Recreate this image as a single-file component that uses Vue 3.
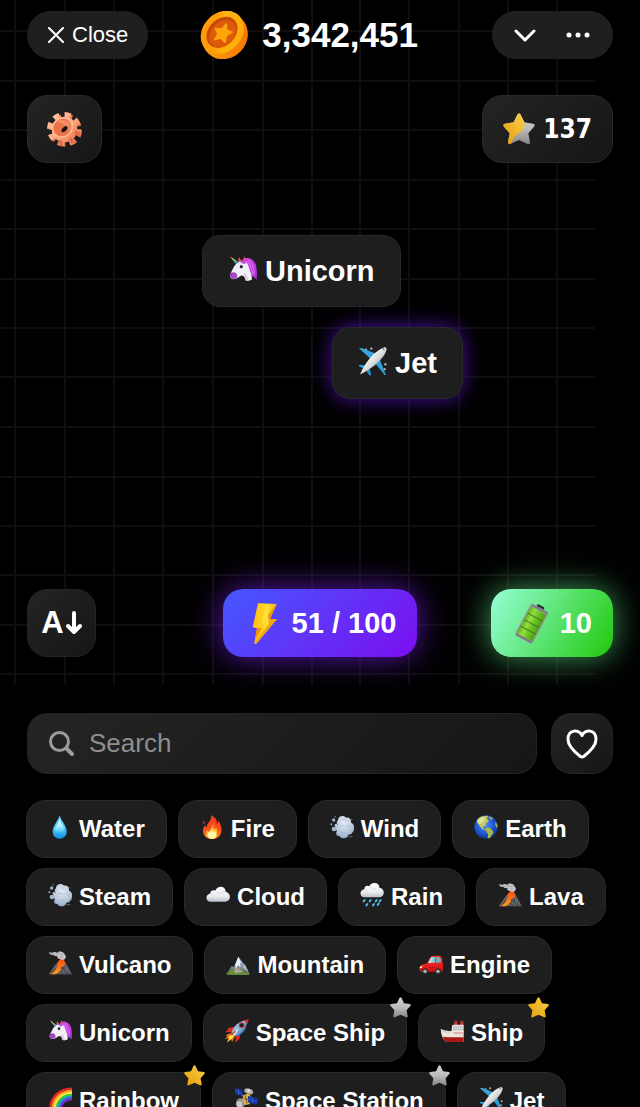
<script setup>
import { ref } from 'vue'

const query = ref('')

const columns = [15, 65, 114, 163, 213, 263, 312, 360, 409, 459, 508, 557]
const rows = [31, 81, 130, 180, 229, 279, 328, 377, 427, 477, 526, 575, 625, 674]

const elements = [
  { name: 'Water', icon: 'water' },
  { name: 'Fire', icon: 'fire' },
  { name: 'Wind', icon: 'wind' },
  { name: 'Earth', icon: 'earth' },
  { name: 'Steam', icon: 'wind' },
  { name: 'Cloud', icon: 'cloud' },
  { name: 'Rain', icon: 'rain' },
  { name: 'Lava', icon: 'volcano' },
  { name: 'Vulcano', icon: 'volcano' },
  { name: 'Mountain', icon: 'mountain' },
  { name: 'Engine', icon: 'car' },
  { name: 'Unicorn', icon: 'unicorn' },
  { name: 'Space Ship', icon: 'rocket', star: 'silver' },
  { name: 'Ship', icon: 'ship', star: 'gold' },
  { name: 'Rainbow', icon: 'rainbow', star: 'gold' },
  { name: 'Space Station', icon: 'satellite', star: 'silver' },
  { name: 'Jet', icon: 'jet' },
]
</script>

<template>
  <div class="page">
    <svg class="defs" width="0" height="0" aria-hidden="true">
      <defs>
        <linearGradient id="g-water" x1="0" y1="0" x2="0" y2="1">
          <stop offset="0" stop-color="#4fc4f7" /><stop offset=".5" stop-color="#5ccbfa" /><stop offset="1" stop-color="#0c8ee8" />
        </linearGradient>
        <linearGradient id="g-water-in" x1="0" y1="0" x2="0" y2="1">
          <stop offset="0" stop-color="#e8fbff" /><stop offset=".55" stop-color="#a9ecff" /><stop offset="1" stop-color="#1fb0f4" />
        </linearGradient>
        <linearGradient id="g-fire" x1="0" y1="0" x2="0" y2="1">
          <stop offset="0" stop-color="#f0391d" /><stop offset=".6" stop-color="#f8501c" /><stop offset="1" stop-color="#ff8f1f" />
        </linearGradient>
        <radialGradient id="g-flame" cx=".5" cy=".85" r=".7">
          <stop offset="0" stop-color="#fffbd0" /><stop offset=".4" stop-color="#ffe14a" /><stop offset="1" stop-color="#ff8a1c" />
        </radialGradient>
        <radialGradient id="g-puff" cx=".45" cy=".3" r=".75">
          <stop offset="0" stop-color="#e3ebf5" /><stop offset=".6" stop-color="#b9c8dc" /><stop offset="1" stop-color="#8ea2bd" />
        </radialGradient>
        <radialGradient id="g-earth" cx=".45" cy=".4" r=".6">
          <stop offset="0" stop-color="#4f96f5" /><stop offset=".6" stop-color="#1f5bd6" /><stop offset="1" stop-color="#15328f" />
        </radialGradient>
        <linearGradient id="g-cloud" x1="0" y1="0" x2="0" y2="1">
          <stop offset="0" stop-color="#ffffff" /><stop offset=".65" stop-color="#e9ebef" /><stop offset="1" stop-color="#b9bfc9" />
        </linearGradient>
        <linearGradient id="g-rock" x1="0" y1="0" x2="1" y2="1">
          <stop offset="0" stop-color="#8b7a6d" /><stop offset="1" stop-color="#4b4b51" />
        </linearGradient>
        <linearGradient id="g-lava" x1="0" y1="0" x2="0" y2="1">
          <stop offset="0" stop-color="#ff4b12" /><stop offset="1" stop-color="#ff9d1b" />
        </linearGradient>
        <linearGradient id="g-mount" x1="0" y1="0" x2="0" y2="1">
          <stop offset="0" stop-color="#8fb4da" /><stop offset=".6" stop-color="#7d8a95" /><stop offset="1" stop-color="#5d6e3e" />
        </linearGradient>
        <linearGradient id="g-car" x1="0" y1="0" x2="0" y2="1">
          <stop offset="0" stop-color="#ff3b35" /><stop offset="1" stop-color="#d20f12" />
        </linearGradient>
        <linearGradient id="g-mane" x1="0" y1="0" x2="1" y2="1">
          <stop offset="0" stop-color="#d94df0" /><stop offset="1" stop-color="#a52fd4" />
        </linearGradient>
        <linearGradient id="g-horn" x1="0" y1="0" x2="1" y2="1">
          <stop offset="0" stop-color="#f05a5a" /><stop offset=".3" stop-color="#f5c84b" /><stop offset=".6" stop-color="#45c98a" /><stop offset="1" stop-color="#4a91e8" />
        </linearGradient>
        <linearGradient id="g-rocket" x1="0" y1="0" x2="1" y2="1">
          <stop offset="0" stop-color="#b9dcf5" /><stop offset=".5" stop-color="#80b2dc" /><stop offset="1" stop-color="#42719f" />
        </linearGradient>
        <linearGradient id="g-jet" x1="0" y1="0" x2="1" y2="1">
          <stop offset=".3" stop-color="#ffffff" /><stop offset=".55" stop-color="#d8d8da" /><stop offset=".75" stop-color="#88888b" />
        </linearGradient>
        <linearGradient id="g-gold" x1="0" y1="1" x2="1" y2="0">
          <stop offset="0" stop-color="#e39c0c" /><stop offset=".55" stop-color="#f0b92b" /><stop offset="1" stop-color="#f8d055" />
        </linearGradient>
        <linearGradient id="g-silver" x1="0" y1="0" x2="0" y2="1">
          <stop offset="0" stop-color="#d2d2d2" /><stop offset=".5" stop-color="#bcbcbc" /><stop offset="1" stop-color="#868686" />
        </linearGradient>
        <linearGradient id="g-coin-side" x1="0" y1="0" x2="1" y2="1">
          <stop offset=".2" stop-color="#ff9d0a" /><stop offset=".8" stop-color="#f77a08" /><stop offset="1" stop-color="#ee5e06" />
        </linearGradient>
        <linearGradient id="g-coin-face" x1="0" y1="0" x2="1" y2="1">
          <stop offset=".1" stop-color="#ff9a08" /><stop offset=".4" stop-color="#ff9f08" /><stop offset=".55" stop-color="#ffb40e" /><stop offset="1" stop-color="#ffa80a" />
        </linearGradient>
        <linearGradient id="g-bolt" x1="0" y1="0" x2="1" y2="0">
          <stop offset="0" stop-color="#ffb90b" /><stop offset=".6" stop-color="#ffdc2e" /><stop offset="1" stop-color="#f5b014" />
        </linearGradient>
        <linearGradient id="g-batt" x1="0" y1="0" x2="1" y2="0">
          <stop offset="0" stop-color="#5fb31c" /><stop offset=".3" stop-color="#93e03f" /><stop offset=".6" stop-color="#6cc322" /><stop offset="1" stop-color="#4fa017" />
        </linearGradient>
        <linearGradient id="g-gear" x1="0" y1="0" x2="1" y2="1">
          <stop offset="0" stop-color="#ffc5a2" /><stop offset=".5" stop-color="#fda680" /><stop offset="1" stop-color="#ea7750" />
        </linearGradient>
        <clipPath id="c-earth"><circle cx="36" cy="36" r="35" /></clipPath>

        <path id="star-shape" d="M43 5q5-7 10 0l11 23 26 4q8 2 3 9L76 61l5 27q0 7-7 5L48 81 22 93q-7 2-7-5l5-27L3 41q-5-7 3-9l26-4Z" />

        <symbol id="water" viewBox="0 0 72 72">
          <path d="M35 1C31 18 14 32 14 51a21 20 0 0 0 42 0C56 32 39 18 35 1Z" fill="url(#g-water)" />
          <path d="M35 10C32 24 21 36 21 47q3 9 14 9t14-9C49 36 38 24 35 10Z" fill="url(#g-water-in)" />
        </symbol>
        <symbol id="fire" viewBox="0 0 72 72">
          <path d="M33 1c12 6 20 13 17 25 5-2 5-7 4-10 9 11 13 27 9 38-4 13-14 18-27 18C20 72 9 62 9 47c0-7 3-13 7-17 0 4 2 6 5 7C19 23 37 18 33 1Z" fill="url(#g-fire)" />
          <path d="M9 18c4 2 6 5 4 10-3-2-4-6-4-10Z" fill="#e7482b" />
          <path d="M39 22c5 11-1 17 4 20 4 0 4-5 4-7 8 9 10 35-11 36-18 0-21-16-14-26 1 4 3 6 6 5 3-9 11-14 11-28Z" fill="url(#g-flame)" />
          <ellipse cx="36" cy="60" rx="13" ry="11" fill="#fff7a8" />
        </symbol>
        <symbol id="wind" viewBox="0 0 72 72">
          <path d="M48 14h19M55 65h12M20 60h18M57 50h15" stroke="#7f90a8" stroke-width="2" />
          <path d="M24 16C24 2 42 0 48 8c10-3 17 7 15 15 12 5 13 20 5 27-2 7-7 9-13 9-3 14-22 14-27 4-10 0-12-9-7-15-8-6-7-17 3-18-6-4-4-10 0-14Z" fill="url(#g-puff)" />
          <path d="M37 15q9-4 11 5M30 33q10-6 17 2M32 51q9 6 18-1M50 31q9-2 10 7" stroke="#a0b1c8" stroke-width="2" fill="none" />
          <circle cx="11" cy="15" r="5" fill="#9badc5" /><circle cx="4" cy="28" r="3" fill="#9badc5" /><circle cx="12" cy="42" r="7" fill="#a6b6cc" /><circle cx="18" cy="31" r="4" fill="#c3d0e0" /><circle cx="15" cy="5" r="2" fill="#8497b0" />
        </symbol>
        <symbol id="earth" viewBox="0 0 72 72">
          <circle cx="36" cy="36" r="35" fill="url(#g-earth)" />
          <g clip-path="url(#c-earth)">
            <path d="M11 12C20 3 34 1 42 3l-3 8 6 7-9 7-2 8-8 2 3 6 6 4-3 1-10-6-7-11C9 25 7 18 11 12Z" fill="#c8c75d" />
            <path d="M18 10l12-4 2 9-8 10-9 2-4-9Z" fill="#dce69a" />
            <path d="M35 39c8-4 18 1 20 8 5 2 4 7 0 10l-5 9-5 5-4-1 1-14-7-9Z" fill="#a8b848" />
            <path d="M44 4l14 5-6 6-8-5ZM65 20l8 12-5 8-5-12Z" fill="#8fa761" />
          </g>
        </symbol>
        <symbol id="cloud" viewBox="0 0 72 72">
          <path d="M14 56C-2 56-3 34 12 32c1-9 10-12 16-9 6-18 31-15 31 3 17 3 17 28 0 30Z" fill="url(#g-cloud)" />
          <path d="M12 33q6-1 9 3M29 23q7 1 8 8 8-5 13 0M48 26q6-3 11 1" fill="none" stroke="#d5d9df" stroke-width="2" />
        </symbol>
        <symbol id="rain" viewBox="0 0 72 72">
          <path d="M14 43C-2 43-3 21 13 19 13 8 23 7 28 10 34-5 59-2 58 14c18 2 17 27 1 29Z" fill="url(#g-cloud)" />
          <path d="M12 20q6-1 9 3M29 10q7 1 8 8 8-4 13 0" fill="none" stroke="#d5d9df" stroke-width="2" />
          <path d="M14 51l-3 4M32 51l-3 4M50 51l-3 4M62 51l-3 4M22 63l-3 4M42 63l-3 4M56 62l-3 4" stroke="#52bce9" stroke-width="6" stroke-linecap="round" />
        </symbol>
        <symbol id="volcano" viewBox="0 0 72 72">
          <path d="M2 70l20-28 10-12h18l22 40Z" fill="url(#g-rock)" />
          <path d="M48 38l24 32H42l-6-16Z" fill="#4d4f59" />
          <path d="M30 34l6-10 12 1 3 16-5 5-8 3 1 7-9 9-8 5H9l14-15 7-12Z" fill="url(#g-lava)" />
          <path d="M22 50l5-3-7 13-7 7-5 1Z" fill="#5b4740" />
          <path d="M51 45l5 17M57 48l9 18M42 56l8 13" stroke="#85878f" stroke-width="2" />
          <path d="M2 4l10 1 8-2 8 2 6-4 11 3 5 6 4 7-3 7-7 3-9-3-8-4 2-4-9-1-5-4-7 0Z" fill="#c6c6c8" />
          <path d="M12 8l13 3 8-5 6 6 6-3M36 17l9 3" stroke="#96969a" stroke-width="2" fill="none" />
        </symbol>
        <symbol id="mountain" viewBox="0 0 72 72">
          <path d="M1 70l16-25 7 3 13-31 14 18 7 6 13 27-13 3Z" fill="url(#g-mount)" />
          <path d="M37 17l10 21-5-3 2 14-8-7-9 19 3-18-5 5Z" fill="#e6f1fb" />
          <path d="M44 27l7 18 6-2 10 20-10-8-7-6Z" fill="#a9bdcd" />
          <path d="M23 63l7-14 3 8 5-9 4 11 6-5 3 9-9 4H25Z" fill="#b5a392" />
          <path d="M1 71l15-22 4 12 9 5 19-3 23 6-3 3Z" fill="#66913d" />
          <path d="M15 53l-8 14M46 57l15 6" stroke="#3e6b2b" stroke-width="2" />
        </symbol>
        <symbol id="car" viewBox="0 0 72 72">
          <path d="M2 60C-1 48 2 43 8 41l16-4 9-17q3-6 10-6h16q8 0 10 8l3 22v12q0 6-6 6H8Z" fill="url(#g-car)" />
          <path d="M28 36l8-15q2-3 6-3h7l-2 17Z" fill="#8ccbd7" />
          <path d="M52 18h7q4 0 5 5l2 11-15 2Z" fill="#6fb3c3" />
          <path d="M28 36l8-15q2-3 6-3l-7 18Z" fill="#c0e4ea" />
          <circle cx="18" cy="61" r="9" fill="#333" /><circle cx="18" cy="61" r="5" fill="#b5b5b7" />
          <circle cx="57" cy="61" r="9" fill="#333" /><circle cx="57" cy="61" r="5" fill="#b5b5b7" />
          <path d="M3 47l8-2-3 6-6 1Z" fill="#fff0d0" /><path d="M30 50h18" stroke="#980e11" stroke-width="2" />
        </symbol>
        <symbol id="unicorn" viewBox="0 0 72 72">
          <path d="M36 12C50 0 70 12 71 34c1 9 1 18 0 28-4-7-10-9-16-9L40 30Z" fill="url(#g-mane)" />
          <path d="M50 14q16 10 15 34M42 14q19 8 18 37" fill="none" stroke="#ef83f5" stroke-width="2" />
          <path d="M24 19C34 12 47 15 51 27c4 11 7 22 9 33q-8 6-16 3C42 56 39 51 33 51c-7 4-11 9-19 9C4 60 3 50 8 42 13 34 15 25 24 19Z" fill="#f1f0f6" />
          <path d="M5 46q7-5 14-2 6 5 3 13-8 5-15 1-4-5-2-12Z" fill="#a549c6" />
          <path d="M42 44q6 6 9 20l-7-1q-1-9-6-12Z" fill="#d9cbe0" />
          <path d="M25 18l2-13 7 10ZM36 15l5-12 4 14Z" fill="#e1517a" />
          <path d="M30 17q8-6 15-1-2 9-9 5Z" fill="#c04ae7" />
          <path d="M5 3l20 14-5 6Z" fill="url(#g-horn)" />
          <circle cx="33" cy="29" r="4" fill="#2b2331" /><circle cx="9" cy="47" r="2" fill="#613176" />
        </symbol>
        <symbol id="rocket" viewBox="0 0 72 72">
          <path d="M28 23l-17 4-9 13 19-1ZM47 42l-4 18-13 11 3-20Z" fill="#de2b22" />
          <path d="M18 42L2 49l6 3-8 8 11-2-6 13 14-10 2 8 9-17Z" fill="#ff7a1c" />
          <path d="M19 47l-9 7 3 4-6 11 13-10 7-9Z" fill="#ffe145" />
          <path d="M19 43C24 22 43 5 65 4c2 22-13 44-35 48Z" fill="url(#g-rocket)" />
          <path d="M30 52C49 46 63 28 65 4c3 26-8 41-33 49Z" fill="#366a9c" />
          <path d="M56 4l15-3-3 15Z" fill="#df2929" />
          <circle cx="50" cy="19" r="9" fill="#db4545" /><circle cx="50" cy="19" r="6" fill="#21232b" />
          <path d="M20 42l22-15-13 23Z" fill="#d8e5ef" /><path d="M18 47l13-10" stroke="#c92d29" stroke-width="4" />
        </symbol>
        <symbol id="ship" viewBox="0 0 72 72">
          <path d="M43 5h9v18h-9zM61 5h9v18h-9z" fill="#db3637" /><path d="M43 5h9v5h-9zM61 5h9v5h-9z" fill="#783136" />
          <path d="M36 20q1-3 5-3h30v28H34Z" fill="#e2e2de" />
          <path d="M40 24h30M39 31h31" stroke="#8a9196" stroke-width="3" stroke-dasharray="4 3" />
          <path d="M2 30q16 7 32 6h37v33H20Q4 60 2 30Z" fill="#eee6dc" />
          <path d="M9 53l14 2h48v14H20Q12 65 9 53Z" fill="#ae1717" /><path d="M4 34l14 6 14-2" stroke="#b8afa5" stroke-width="2" fill="none" />
          <path d="M40 42h31" stroke="#c84b4d" stroke-width="2" />
        </symbol>
        <symbol id="rainbow" viewBox="0 0 72 72">
          <g fill="none" stroke-width="7">
            <path d="M7 72V68C7 30 34 5 72 5" stroke="#f22425" />
            <path d="M14 72V68C14 35 38 12 72 12" stroke="#ff9a20" />
            <path d="M20 72V68C20 39 41 18 72 18" stroke="#fbe63f" />
            <path d="M26 72V68C26 42 45 24 72 24" stroke="#38cd49" />
            <path d="M32 72V68C32 45 49 30 72 30" stroke="#218be4" />
            <path d="M38 72V68C38 49 53 36 72 36" stroke="#7330ca" />
          </g>
        </symbol>
        <symbol id="satellite" viewBox="0 0 72 72">
          <circle cx="20" cy="48" r="14" fill="#8f9190" /><circle cx="16" cy="52" r="9" fill="#c9c9c5" />
          <path d="M22 24l34 14" stroke="#9a9a9a" stroke-width="5" />
          <path d="M29 24l15-5 10 13-7 20-14 2-8-14Z" fill="#e0b13f" /><path d="M34 25l5 24M29 36l20 1" stroke="#705a32" stroke-width="3" />
          <ellipse cx="44" cy="13" rx="14" ry="8" transform="rotate(20 44 13)" fill="#b0afad" /><circle cx="44" cy="11" r="5" fill="#deddda" />
          <path d="M2 3l23 6 1 18-21-5ZM42 27l30 7-4 20-26-8Z" fill="#1436a8" />
          <path d="M13 6l2 18M3 12l22 7M56 31l-1 18M42 36l28 8" stroke="#4766c4" stroke-width="2" />
        </symbol>
        <symbol id="jet" viewBox="0 0 72 72">
          <g fill="#adadb0"><circle cx="20" cy="7" r="3" /><circle cx="33" cy="4" r="3" /><circle cx="68" cy="43" r="3" /><circle cx="66" cy="55" r="3" /></g>
          <path d="M2 3l9 0 37 15-9 18Z" fill="#36a5da" /><path d="M52 25l17 44-2 2-28-35Z" fill="#2c9fd7" />
          <path d="M3 44l20 2 5 5 5 20-5-1-9-14L2 48Z" fill="#239bdc" />
          <path d="M5 68l6-13C24 31 43 9 64 1q7-2 7 4C69 24 37 54 5 68Z" fill="url(#g-jet)" />
          <path d="M63 3l4 4-7-1Z" fill="#3c4b58" />
        </symbol>
        <symbol id="gold" viewBox="0 0 96 96"><use href="#star-shape" fill="url(#g-gold)" /></symbol>
        <symbol id="silver" viewBox="0 0 96 96"><use href="#star-shape" fill="url(#g-silver)" /></symbol>
      </defs>
    </svg>

    <main class="board">
      <svg class="grid" aria-hidden="true">
        <line v-for="x in columns" :key="'c' + x" :x1="x" :x2="x" y1="0" y2="100%" />
        <line v-for="y in rows" :key="'r' + y" x1="0" x2="93%" :y1="y" :y2="y" />
      </svg>

      <header class="header">
        <button class="pill close" type="button">
          <svg width="16" height="16" viewBox="0 0 16 16" fill="none" stroke="#fff" stroke-width="2" stroke-linecap="round" aria-hidden="true"><path d="M1 1l14 14M15 1L1 15" /></svg>
          Close
        </button>
        <div class="balance">
          <svg width="48" height="48" viewBox="0 0 144 144" aria-hidden="true">
            <ellipse cx="75" cy="76" rx="72" ry="65" transform="rotate(-45 75 76)" fill="url(#g-coin-side)" />
            <ellipse cx="67" cy="64" rx="71" ry="58" transform="rotate(-45 67 64)" fill="url(#g-coin-face)" />
            <ellipse cx="66" cy="64" rx="52" ry="40" transform="rotate(-45 66 64)" fill="#c74706" />
            <ellipse cx="68" cy="68" rx="46" ry="35" transform="rotate(-45 68 68)" fill="#dd5a08" />
            <g transform="translate(68 67) rotate(-45) scale(1 .85) rotate(62)">
              <path d="M0-32l9 19 21 3-15 15 4 21-19-10-19 10 4-21-15-15 21-3Z" fill="#ffa50c" stroke="#ffa50c" stroke-width="4" stroke-linejoin="round" />
            </g>
          </svg>
          <strong>3,342,451</strong>
        </div>
        <div class="pill menu">
          <button type="button" aria-label="Minimize">
            <svg width="22" height="13" viewBox="0 0 22 13" fill="none" stroke="#fff" stroke-width="3" stroke-linecap="round" stroke-linejoin="round" aria-hidden="true"><path d="M2 2l9 9 9-9" /></svg>
          </button>
          <button type="button" aria-label="More">
            <svg width="24" height="6" viewBox="0 0 24 6" fill="#fff" aria-hidden="true"><circle cx="3" cy="3" r="2.5" /><circle cx="12" cy="3" r="2.5" /><circle cx="21" cy="3" r="2.5" /></svg>
          </button>
        </div>
      </header>

      <div class="tools">
        <button class="tile gear" type="button" aria-label="Settings">
          <svg width="35" height="35" viewBox="0 0 104 104" aria-hidden="true">
            <circle cx="55" cy="54" r="42" fill="none" stroke="#e87650" stroke-width="14" stroke-dasharray="19 14" />
            <circle cx="51" cy="51" r="43" fill="none" stroke="url(#g-gear)" stroke-width="16" stroke-dasharray="18 15.770" />
            <circle cx="52" cy="52" r="38" fill="url(#g-gear)" />
            <path d="M72 76l10 12-9 6-9-12ZM84 56l16 4-5 12-14-6ZM44 84l4 17-10 0-4-17Z" fill="#de6b47" />
            <ellipse cx="46" cy="46" rx="33" ry="30" transform="rotate(-40 46 46)" fill="#ffb893" />
            <ellipse cx="46" cy="46" rx="28" ry="25" transform="rotate(-40 46 46)" fill="#ea734c" />
            <path d="M30 28Q50 16 66 32 74 44 66 58 60 36 30 28Z" fill="#f58d66" />
            <ellipse cx="52" cy="51" rx="11" ry="6" transform="rotate(-45 52 51)" fill="#17120f" />
          </svg>
        </button>
        <div class="tile score">
          <svg width="32" height="32" viewBox="0 0 96 96" aria-hidden="true">
            <use href="#star-shape" fill="url(#g-silver)" />
            <path d="M43 5q5-7 10 0l11 23C70 50 48 59 38 68 27 77 29 88 22 93q-7 2-7-5l5-27L3 41q-5-7 3-9l26-4Z" fill="url(#g-gold)" />
          </svg>
          <strong>137</strong>
        </div>
      </div>

      <div class="canvas">
        <button class="card unicorn" type="button"><svg class="card-icon" aria-hidden="true"><use href="#unicorn" /></svg>Unicorn</button>
        <button class="card jet" type="button"><svg class="card-icon" aria-hidden="true"><use href="#jet" /></svg>Jet</button>
      </div>

      <div class="actions">
        <button class="tile sort" type="button" aria-label="Sort A to Z">
          <span>A</span>
          <svg width="16" height="24" viewBox="0 0 16 24" fill="none" stroke="#fff" stroke-width="4" stroke-linecap="round" stroke-linejoin="round" aria-hidden="true"><path d="M8 2v19M2 15l6 6 6-6" /></svg>
        </button>
        <button class="boost energy" type="button">
          <svg width="41" height="41" viewBox="0 0 123 123" aria-hidden="true">
            <path d="M45 1l56 2-20 45h21L41 121q-5 4-7-1l8-44-13-3Z" fill="url(#g-bolt)" />
            <path d="M101 3L81 48l-12-3Z" fill="#e79710" />
            <path d="M81 48h21L41 121q-5 4-7-1l47-61-16-4Z" fill="#f3a30e" />
            <path d="M42 76l15-2-22 41Z" fill="#ed9208" /><path d="M70 2L57 59l20 0" fill="#ffe03a" />
          </svg>
          51 / 100
        </button>
        <button class="boost charge" type="button">
          <svg width="41" height="41" viewBox="0 0 123 123" aria-hidden="true">
            <g transform="rotate(28 62 62)">
              <rect x="50" y="1" width="24" height="14" rx="4" fill="#2a2e31" />
              <rect x="32" y="8" width="60" height="108" rx="7" fill="#94969c" />
              <rect x="36" y="17" width="52" height="91" rx="2" fill="url(#g-batt)" />
              <path d="M36 40h52M36 62h52M36 84h52" stroke="#417717" stroke-width="3" />
              <path d="M36 12h52M36 112h52" stroke="#6b6e75" stroke-width="3" />
            </g>
          </svg>
          10
        </button>
      </div>
    </main>

    <form class="search-row" @submit.prevent>
      <label class="search">
        <svg width="25" height="25" viewBox="0 0 25 25" fill="none" stroke="#9b9b9b" stroke-linecap="round" aria-hidden="true"><circle cx="10.500" cy="10.500" r="9" stroke-width="3" /><path d="M17.500 17.500L23 23" stroke-width="4" /></svg>
        <input v-model="query" type="text" placeholder="Search" aria-label="Search" />
      </label>
      <button class="favorite" type="button" aria-label="Favorites">
        <svg width="32" height="30" viewBox="0 0 32 30" fill="none" stroke="#fff" stroke-width="3" stroke-linejoin="round" aria-hidden="true"><path d="M16 6.500C13 0 2 0 2 10.500C2 18 10 24 14.500 27.500Q16 28.500 17.500 27.500C22 24 30 18 30 10.500C30 0 19 0 16 6.500Z" /></svg>
      </button>
    </form>

    <ul class="elements">
      <li v-for="item in elements" :key="item.name">
        <button class="chip" type="button"><svg class="chip-icon" aria-hidden="true"><use :href="'#' + item.icon" /></svg>{{ item.name }}</button>
        <svg v-if="item.star" class="chip-star" aria-hidden="true"><use :href="'#' + item.star" /></svg>
      </li>
    </ul>
  </div>
</template>

<style>
body {
  background: #000;
}
</style>

<style scoped>
.page {
  display: flex;
  flex-direction: column;
  height: 100vh;
  overflow: hidden;
  background: #000;
  color: #fff;
  font-family: "Liberation Sans", Arial, sans-serif;
}
.defs {
  position: absolute;
}
button {
  margin: 0;
  padding: 0;
  border: 0;
  background: none;
  color: inherit;
  font: inherit;
  cursor: pointer;
}
svg {
  display: block;
  flex: none;
}
.board {
  position: relative;
  display: flex;
  flex-direction: column;
  flex: none;
  padding: 11px 27px 28px;
}
.grid {
  position: absolute;
  inset: 0;
  width: 100%;
  height: 100%;
}
.grid line {
  stroke: #0e0e0e;
  stroke-width: 2;
}
.header,
.tools,
.canvas,
.actions {
  position: relative;
}
.header {
  display: flex;
  align-items: center;
  justify-content: space-between;
}
.pill {
  display: flex;
  align-items: center;
  height: 48px;
  border-radius: 24px;
  background: #1f1f1f;
}
.close {
  gap: 8px;
  padding: 0 20px 0 21px;
  font-size: 22px;
}
.balance {
  display: flex;
  align-items: center;
  gap: 14px;
  margin-right: 22px;
  font-size: 35px;
  line-height: 48px;
}
.menu {
  gap: 30px;
  padding: 0 23px 0 22px;
}
.menu button {
  display: flex;
  align-items: center;
  height: 48px;
}
.tools {
  display: flex;
  justify-content: space-between;
  margin-top: 36px;
}
.tile {
  box-sizing: border-box;
  display: flex;
  align-items: center;
  justify-content: center;
  height: 68px;
  border: 1px solid #292929;
  border-radius: 20px;
  background: linear-gradient(135deg, #242424, #161616);
}
.gear {
  width: 75px;
}
.score {
  gap: 8px;
  padding: 0 20px;
  font-family: "DejaVu Sans Condensed", "DejaVu Sans", Verdana, sans-serif;
  font-size: 26px;
}
.canvas {
  height: 426px;
}
.card {
  position: absolute;
  box-sizing: border-box;
  display: flex;
  align-items: center;
  gap: 8px;
  height: 72px;
  padding: 0 25px;
  border: 1px solid #292929;
  border-radius: 18px;
  background: #1e1e1e;
  font-size: 29px;
  font-weight: 700;
}
.card.unicorn {
  top: 72px;
  left: 175px;
}
.card.jet {
  top: 164px;
  left: 305px;
  box-shadow: 0 0 20px #4a10a0;
}
.card-icon {
  width: 29px;
  height: 29px;
  margin-bottom: 4px;
}
.actions {
  display: grid;
  grid-template-columns: 1fr auto 1fr;
  align-items: center;
}
.sort {
  gap: 2px;
  width: 69px;
  border-color: #222;
  font-size: 31px;
  font-weight: 700;
}
.boost {
  display: flex;
  align-items: center;
  gap: 8px;
  height: 68px;
  padding: 0 21px 0 20px;
  border-radius: 20px;
  font-size: 29px;
  font-weight: 700;
}
.energy {
  background: linear-gradient(135deg, #4459ff, #7c0ef0);
  box-shadow: 0 0 32px #5a18b0;
}
.charge {
  justify-self: end;
  background: linear-gradient(120deg, #97ffd8, #20c80c);
  box-shadow: 0 0 32px #409c5a;
}
.search-row {
  display: flex;
  flex: none;
  gap: 14px;
  margin: 28px 27px 0;
}
.search,
.favorite {
  box-sizing: border-box;
  display: flex;
  align-items: center;
  height: 61px;
  border: 1px solid #242424;
  border-radius: 20px;
  background: linear-gradient(135deg, #242424, #161616);
}
.search {
  flex: 1;
  gap: 15px;
  min-width: 0;
  padding: 0 21px;
}
.search input {
  flex: 1;
  min-width: 0;
  padding: 0;
  border: 0;
  outline: 0;
  background: none;
  color: #fff;
  font: inherit;
  font-size: 26px;
}
.search input::placeholder {
  color: #8f8f8f;
  opacity: 1;
}
.favorite {
  justify-content: center;
  width: 62px;
}
.elements {
  display: flex;
  flex: 1;
  flex-wrap: wrap;
  align-content: flex-start;
  gap: 10px 11px;
  min-height: 0;
  margin: 0;
  padding: 26px 27px 26px 26px;
  overflow-y: auto;
  scrollbar-width: none;
  list-style: none;
}
.elements li {
  position: relative;
}
.chip {
  box-sizing: border-box;
  display: flex;
  align-items: center;
  gap: 7px;
  height: 58px;
  padding: 0 21px;
  border: 1px solid #292929;
  border-radius: 19px;
  background: #1e1e1e;
  font-size: 24px;
  font-weight: 700;
  white-space: nowrap;
}
.chip-icon {
  width: 24px;
  height: 24px;
  margin-bottom: 4px;
}
.chip-star {
  position: absolute;
  top: -7px;
  right: -4px;
  width: 21px;
  height: 21px;
}
</style>
